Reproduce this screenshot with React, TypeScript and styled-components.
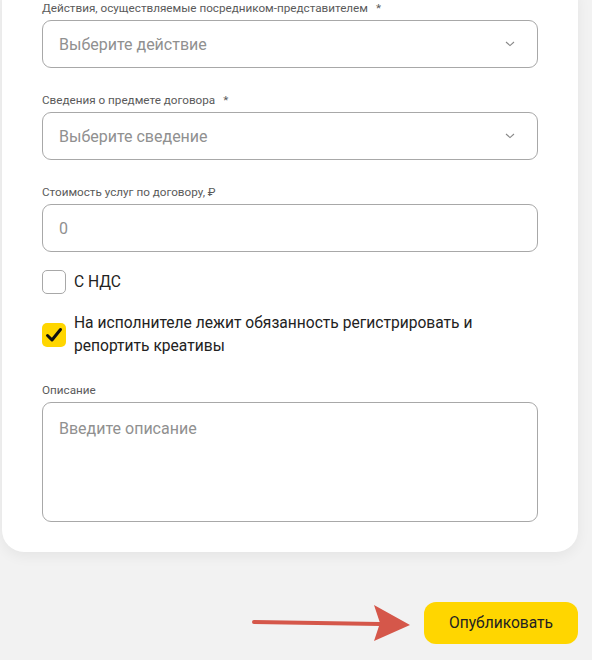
import React from "react";
import styled, { createGlobalStyle } from "styled-components";

const GlobalStyle = createGlobalStyle`
  html, body {
    margin: 0;
    padding: 0;
    background: #f2f2f2;
    font-family: Roboto, "Noto Sans", Arial, sans-serif;
    color: #222;
  }
`;

const Page = styled.div`
  width: 592px;
  height: 660px;
  overflow: hidden;
  display: flex;
  flex-direction: column;
`;

const Card = styled.div`
  margin: -20px 0 0 2px;
  width: 576px;
  box-sizing: border-box;
  padding: 20px 40px 30px 40px;
  background: #fff;
  border-radius: 22px;
  box-shadow: 0 4px 14px rgba(0, 0, 0, 0.06);
  display: flex;
  flex-direction: column;
`;

const Field = styled.div<{ $gap?: number }>`
  display: flex;
  flex-direction: column;
  margin-bottom: ${({ $gap }) => ($gap ?? 24)}px;
`;

const Label = styled.div`
  font-size: 11.7px;
  line-height: 16px;
  color: #5a5a5a;
  margin-bottom: 4px;
  white-space: nowrap;
`;

const Star = styled.span`
  margin-left: 8px;
`;

const Box = styled.div<{ $height?: number; $top?: boolean }>`
  width: 496px;
  height: ${({ $height }) => $height ?? 48}px;
  box-sizing: border-box;
  border: 1px solid #a8a8a8;
  border-radius: 9px;
  padding: ${({ $top }) => ($top ? "16px 16px" : "0 16px")};
  display: flex;
  align-items: ${({ $top }) => ($top ? "flex-start" : "center")};
  justify-content: space-between;
  font-size: 16px;
  color: #909090;
  background: #fff;
`;

const Chevron = () => (
  <svg width="10" height="6" viewBox="0 0 10 6" style={{ marginRight: 6 }}>
    <path d="M1 1 L5 4.6 L9 1" fill="none" stroke="#888" strokeWidth="1.1" />
  </svg>
);

const CheckRow = styled.div<{ $gap?: number }>`
  display: flex;
  align-items: center;
  gap: 8px;
  margin-bottom: ${({ $gap }) => $gap ?? 0}px;
`;

const CheckBox = styled.div<{ $checked?: boolean }>`
  width: 24px;
  height: 24px;
  flex: none;
  box-sizing: border-box;
  border-radius: 5px;
  border: ${({ $checked }) => ($checked ? "none" : "1px solid #a8a8a8")};
  background: ${({ $checked }) => ($checked ? "#ffd600" : "#fff")};
  display: flex;
  align-items: center;
  justify-content: center;
`;

const CheckText = styled.div`
  font-size: 15.6px;
  line-height: 23px;
  color: #222;
`;

const Footer = styled.div`
  display: flex;
  align-items: center;
  justify-content: flex-end;
  padding: 50px 14px 0 0;
  gap: 12px;
`;

const Button = styled.button`
  width: 154px;
  height: 42px;
  border: none;
  border-radius: 12px;
  background: #ffd600;
  font-family: inherit;
  font-size: 15.6px;
  color: #222;
`;

const Arrow = () => (
  <svg width="162" height="40" viewBox="0 0 162 40">
    <line x1="4" y1="19" x2="130" y2="21" stroke="#d5574a" strokeWidth="4" strokeLinecap="round" />
    <polygon points="124,2 160,22 124,38 130,20" fill="#d5574a" />
  </svg>
);

export default function App() {
  return (
    <Page>
      <GlobalStyle />
      <Card>
        <Field>
          <Label>
            Действия, осуществляемые посредником-представителем<Star>*</Star>
          </Label>
          <Box>
            Выберите действие
            <Chevron />
          </Box>
        </Field>
        <Field>
          <Label>
            Сведения о предмете договора<Star>*</Star>
          </Label>
          <Box>
            Выберите сведение
            <Chevron />
          </Box>
        </Field>
        <Field $gap={18}>
          <Label>Стоимость услуг по договору, ₽</Label>
          <Box>0</Box>
        </Field>
        <CheckRow $gap={18}>
          <CheckBox />
          <CheckText>С НДС</CheckText>
        </CheckRow>
        <CheckRow $gap={24}>
          <CheckBox $checked>
            <svg width="18" height="16" viewBox="0 0 18 16">
              <path d="M2.5 8.5 L7 13 L15.5 2.5" fill="none" stroke="#111" strokeWidth="3" strokeLinecap="round" strokeLinejoin="round" />
            </svg>
          </CheckBox>
          <CheckText>
            На исполнителе лежит обязанность регистрировать и
            <br />
            репортить креативы
          </CheckText>
        </CheckRow>
        <Field $gap={0}>
          <Label>Описание</Label>
          <Box $height={120} $top>
            Введите описание
          </Box>
        </Field>
      </Card>
      <Footer>
        <Arrow />
        <Button>Опубликовать</Button>
      </Footer>
    </Page>
  );
}
